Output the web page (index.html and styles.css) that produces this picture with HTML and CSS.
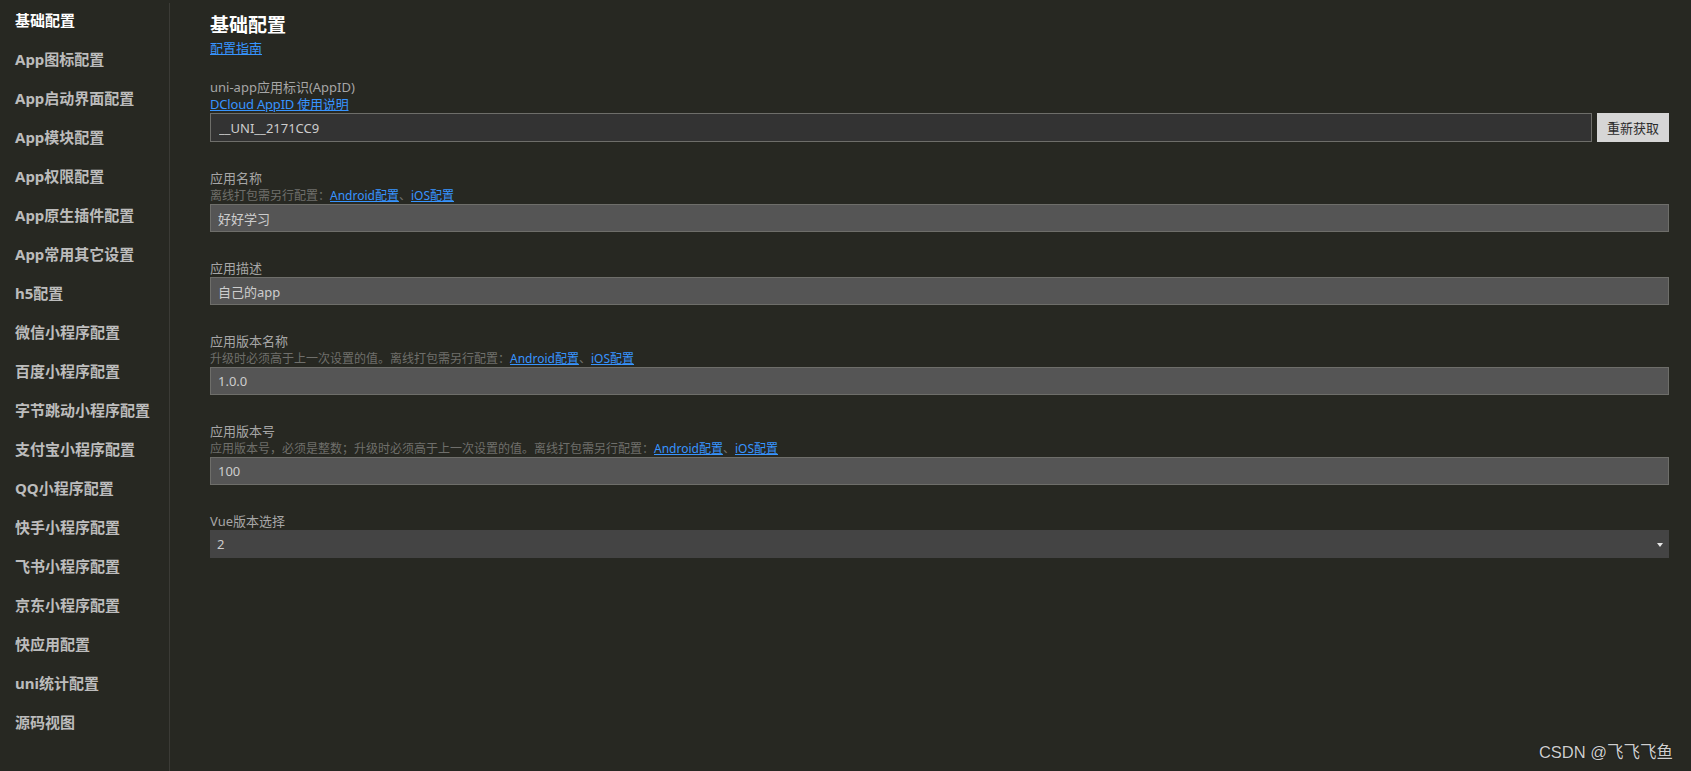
FILE: index.html
```html
<html lang="zh-CN">
  <head>
    <meta charset="UTF-8" />
    <meta name="viewport" content="width=device-width, initial-scale=1.0" />
    <title>manifest.json</title>
    <link rel="stylesheet" href="styles.css">
  </head>
  <body>
    <div class="page">
      <aside class="sidebar">
        <ul class="nav">
          <li class="active">基础配置</li>
          <li>App图标配置</li>
          <li>App启动界面配置</li>
          <li>App模块配置</li>
          <li>App权限配置</li>
          <li>App原生插件配置</li>
          <li>App常用其它设置</li>
          <li>h5配置</li>
          <li>微信小程序配置</li>
          <li>百度小程序配置</li>
          <li>字节跳动小程序配置</li>
          <li>支付宝小程序配置</li>
          <li>QQ小程序配置</li>
          <li>快手小程序配置</li>
          <li>飞书小程序配置</li>
          <li>京东小程序配置</li>
          <li>快应用配置</li>
          <li>uni统计配置</li>
          <li>源码视图</li>
        </ul>
      </aside>

      <main class="content">
        <h1 class="title">基础配置</h1>
        <a class="guide" href="#">配置指南</a>

        <div class="field first">
          <label>uni-app应用标识(AppID)</label>
          <a class="desc-link" href="#">DCloud AppID 使用说明</a>
          <div class="appid_row">
            <input class="input dark" type="text" value="__UNI__2171CC9" />
            <button class="btn">重新获取</button>
          </div>
        </div>

        <div class="field">
          <label>应用名称</label>
          <div class="desc">离线打包需另行配置：<a href="#">Android配置</a>、<a href="#">iOS配置</a></div>
          <input class="input" type="text" value="好好学习" />
        </div>

        <div class="field">
          <label>应用描述</label>
          <input class="input" type="text" value="自己的app" />
        </div>

        <div class="field">
          <label>应用版本名称</label>
          <div class="desc">升级时必须高于上一次设置的值。离线打包需另行配置：<a href="#">Android配置</a>、<a href="#">iOS配置</a></div>
          <input class="input" type="text" value="1.0.0" />
        </div>

        <div class="field">
          <label>应用版本号</label>
          <div class="desc">应用版本号，必须是整数；升级时必须高于上一次设置的值。离线打包需另行配置：<a href="#">Android配置</a>、<a href="#">iOS配置</a></div>
          <input class="input" type="text" value="100" />
        </div>

        <div class="field">
          <label>Vue版本选择</label>
          <div class="select">
            <span>2</span>
            <span class="caret"></span>
          </div>
        </div>
      </main>
    </div>

    <div class="watermark">CSDN @飞飞飞鱼</div>
  </body>
</html>
```

FILE: styles.css
```css
body {
  margin: 0;
  background-color: #272822;
  font-family: "Noto Sans", "Noto Sans CJK SC", sans-serif;
  color: #a9a9a9;
}

.page {
  display: flex;
  min-height: 100vh;
}

.sidebar {
  width: 169px;
  flex-shrink: 0;
  border-right: 1px solid #3b3b36;
  margin-top: 3px;
}

.nav {
  list-style: none;
  margin: -2px 0 0;
  padding: 0;
}

.nav li {
  height: 39px;
  line-height: 39px;
  padding-left: 15px;
  font-size: 15px;
  font-weight: bold;
  color: #bcbcbc;
  white-space: nowrap;
}

.nav li.active {
  color: #ffffff;
}

.content {
  flex: 1;
  padding: 12px 22px 0 40px;
}

.title {
  margin: 0;
  font-size: 19px;
  line-height: 26px;
  font-weight: bold;
  color: #ffffff;
}

a {
  color: #3794ff;
  text-decoration: underline;
}

.guide {
  display: block;
  margin-top: 1px;
  font-size: 13px;
  line-height: 18px;
  width: max-content;
}

.field {
  margin-top: 27px;
}

.field.first {
  margin-top: 21px;
}

.field label {
  display: block;
  font-size: 13px;
  line-height: 18px;
  color: #a6a6a6;
}

.desc-link {
  display: block;
  font-size: 13px;
  line-height: 16px;
  width: max-content;
  letter-spacing: -0.2px;
}

.desc {
  font-size: 12px;
  line-height: 17px;
  color: #6f6f6b;
}

.appid_row {
  display: flex;
  gap: 5px;
  margin-top: 1px;
  height: 29px;
}

.input {
  display: block;
  box-sizing: border-box;
  width: 100%;
  height: 28px;
  margin: 0;
  padding: 0 7px;
  border: 1px solid #6e6e6a;
  background-color: #555555;
  color: #cdcdcd;
  font-family: "Noto Sans", "Noto Sans CJK SC", sans-serif;
  font-size: 13px;
  outline: none;
}

.input.dark {
  flex: 1;
  height: 29px;
  background-color: #333333;
  padding-left: 8px;
}

.btn {
  width: 72px;
  height: 29px;
  flex-shrink: 0;
  border: none;
  background-color: #d6d6d6;
  color: #2b2b2b;
  font-family: "Noto Sans CJK SC", sans-serif;
  font-size: 13px;
  padding: 0;
}

.select {
  display: flex;
  align-items: center;
  justify-content: space-between;
  height: 28px;
  padding: 0 6px 0 7px;
  background-color: #444444;
  color: #cdcdcd;
  font-size: 13px;
}

.caret {
  width: 0;
  height: 0;
  border-left: 3px solid transparent;
  border-right: 3px solid transparent;
  border-top: 4px solid #e6e6e6;
  margin-top: 2px;
}

.watermark {
  position: absolute;
  right: 18px;
  bottom: 8px;
  font-family: "Liberation Sans", "Noto Sans CJK SC", sans-serif;
  font-size: 16.5px;
  color: #cfcfcf;
  text-shadow: 0 0 1px #000;
}
```
